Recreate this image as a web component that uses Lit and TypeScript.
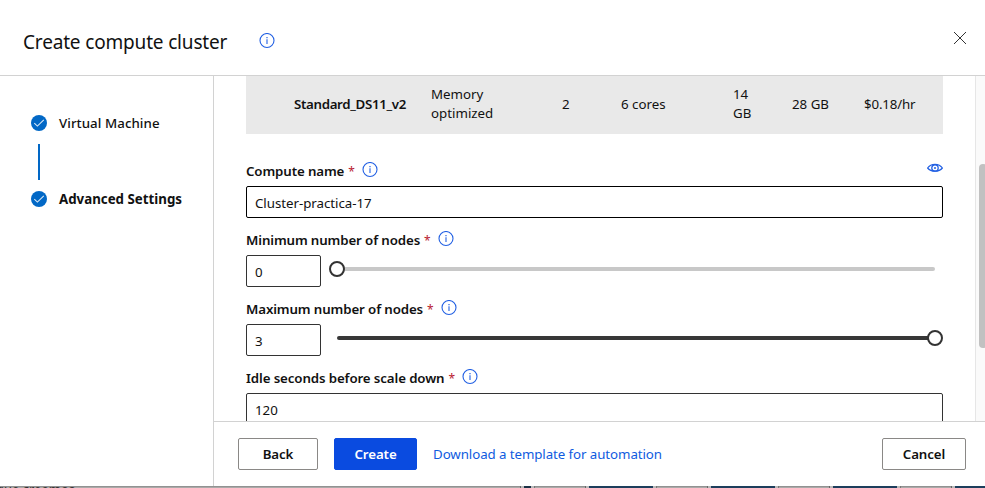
import { LitElement, html, css, svg } from "lit";
import { customElement, property } from "lit/decorators.js";

@customElement("info-icon")
class InfoIcon extends LitElement {
  static styles = css`
    :host { display: block; width: 16px; height: 16px; flex: none; }
    svg { display: block; }
  `;
  render() {
    return html`<svg width="16" height="16" viewBox="0 0 16 16" fill="none">
      <circle cx="8" cy="7.5" r="7" stroke="#2260e3" stroke-width="1.1" />
      <path d="M8 6.2V11" stroke="#2260e3" stroke-width="1.1" />
      <path d="M8 4V5.2" stroke="#2260e3" stroke-width="1.2" />
    </svg>`;
  }
}

@customElement("field-label")
class FieldLabel extends LitElement {
  @property() text = "";
  static styles = css`
    :host { display: flex; align-items: center; height: 37px; box-sizing: border-box; padding-top: 7px; white-space: nowrap; }
    .text { font-weight: 600; color: #111; letter-spacing: -0.12px; }
    .star { color: #b8192f; margin: 0 7px 0 4px; font-size: 12px; }
    info-icon { margin-top: -3px; }
  `;
  render() {
    return html`<span class="text">${this.text}</span><span class="star">*</span><info-icon></info-icon>`;
  }
}

@customElement("node-slider")
class NodeSlider extends LitElement {
  @property({ type: Number }) value = 0;
  static styles = css`
    :host { display: flex; align-items: center; height: 16px; flex: 1; }
    .fill, .rest { height: 4px; }
    .fill { background: #373737; border-radius: 2px 0 0 2px; margin-left: 8px; }
    .rest { background: #c8c8c8; flex: 1; border-radius: 0 2px 2px 0; margin-right: 8px; }
    .thumb { width: 16px; height: 16px; box-sizing: border-box; border: 2px solid #333; border-radius: 50%; background: #fff; flex: none; margin: 0 -8px; z-index: 1; }
  `;
  render() {
    return html`<div class="fill" style="width:calc(${this.value} * (100% - 16px))"></div>
      <div class="thumb"></div><div class="rest"></div>`;
  }
}

const check = svg`<svg width="16" height="16" viewBox="0 0 16 16" fill="none">
  <circle cx="8" cy="8" r="8" fill="#0268c6"/>
  <path d="M3.3 8.1L6.4 11.1L12.8 4.9" stroke="#d8e8f7" stroke-width="1.1"/></svg>`;

const tiles = [589, 711, 833, 955];

@customElement("app-root")
class AppRoot extends LitElement {
  static styles = css`
    :host { display: flex; flex-direction: column; width: 985px; height: 488px; overflow: hidden; background: #fff;
      font: 13.3px/19px "Noto Sans", "Open Sans", sans-serif; color: #111; }
    svg { display: block; flex: none; }
    header { height: 76px; box-sizing: border-box; border-bottom: 1px solid #d2d2d2; display: flex; align-items: center; padding: 9px 18px 0 23px; flex: none; }
    h1 { font-size: 19px; line-height: 26px; letter-spacing: -0.17px; font-weight: 400; margin: 0; width: 235.5px; white-space: nowrap; }
    header info-icon { margin-top: -2px; }
    .close { margin: -9px 0 0 auto; }
    .body { display: flex; height: 410px; flex: none; }
    nav { width: 214px; box-sizing: border-box; border-right: 1px solid #d2d2d2; padding: 37px 0 0 31px; flex: none; }
    .step { display: flex; align-items: center; gap: 12px; height: 20px; white-space: nowrap; font-weight: 500; }
    .s1 { letter-spacing: 0.06px; }
    .step.current { font-weight: 700; }
    .line { width: 2px; height: 36px; background: #0268c6; margin: 11px 0 9px 7px; }
    main { flex: 1; min-width: 0; display: flex; flex-direction: column; }
    .scroll { height: 345px; display: flex; overflow: hidden; }
    .form { width: 697px; padding-left: 32px; flex: none; }
    .row { height: 58px; background: #e9e9e9; display: grid; grid-template-columns: 137px 131px 59px 112px 59px 72px auto; padding-left: 48px; align-items: center; margin-bottom: 15px; white-space: nowrap; }
    .row > * { padding-bottom: 2px; }
    .row b { font-weight: 600; letter-spacing: -0.33px; }
    .price { letter-spacing: -0.16px; }
    .top { display: flex; justify-content: space-between; align-items: center; }
    .input { height: 32px; box-sizing: border-box; border: 1px solid #333; border-radius: 2px; padding: 7px 8px 0; line-height: 18px; }
    .input.active { border-color: #000; letter-spacing: -0.04px; }
    .pair { display: flex; gap: 8px; align-items: flex-start; }
    .pair .input { width: 75px; }
    .pair node-slider { margin-top: 6px; }
    .bar { margin-left: 32px; width: 10px; box-sizing: border-box; border-left: 1px solid #e6e6e6; background: #fafafa; padding: 88px 0 0 3px; overflow: hidden; }
    .grip { width: 8px; height: 184px; border-radius: 4px; background: #c1c1c1; }
    footer { height: 65px; box-sizing: border-box; border-top: 1px solid #d2d2d2; display: flex; align-items: center; padding: 0 19px 0 24px; }
    .btn { height: 32px; box-sizing: border-box; border: 1px solid #8a8886; border-radius: 2px; display: flex; align-items: center; justify-content: center; font-weight: 600; letter-spacing: -0.1px; width: 80px; }
    .primary { width: 83px; margin: 0 16px; background: #0a4be0; border-color: #0a4be0; color: #fff; }
    .cancel { width: 84px; margin-left: auto; }
    .link { color: #0f5be0; white-space: nowrap; letter-spacing: -0.08px; }
    .under { height: 2px; flex: none; position: relative; overflow: hidden; background: linear-gradient(#929292 50%, #aaa9a8 50%); font-size: 13px; }
    .under span { position: absolute; left: -4px; top: -6px; color: #35312f; white-space: nowrap; }
    .tile { position: absolute; top: 0; height: 2px; width: 64px; background: #1d3e5c; box-shadow: -3px 0 #bbb, -4px 0 #666, 3px 0 #bbb, 4px 0 #777; }
    .tile.small { left: 524px; width: 7px; background: #1b3146; }
  `;
  render() {
    return html`
      <header>
        <h1>Create compute cluster</h1><info-icon></info-icon>
        <svg class="close" width="14" height="14" viewBox="0 0 14 14"><path d="M1 1L13 13M13 1L1 13" stroke="#333" stroke-width="1"/></svg>
      </header>
      <div class="body">
        <nav>
          <div class="step">${check}<span class="s1">Virtual Machine</span></div>
          <div class="line"></div>
          <div class="step current">${check}<span class="s2">Advanced Settings</span></div>
        </nav>
        <main>
          <div class="scroll">
            <div class="form">
              <div class="row"><b>Standard_DS11_v2</b><span>Memory<br>optimized</span><span>2</span><span>6 cores</span><span>14<br>GB</span><span>28 GB</span><span class="price">$0.18/hr</span></div>
              <div class="top"><field-label text="Compute name"></field-label>
                <svg width="16" height="12" viewBox="0 0 16 12" fill="none" stroke="#2260e3"><path d="M.6 6C4 1.2 12 1.2 15.4 6C12 10.2 4 10.2 .6 6Z" stroke-width="1.2"/><circle cx="8" cy="6" r="3.2" stroke-width="1.3"/><circle cx="8" cy="6" r="1" fill="#2260e3" stroke="none"/></svg>
              </div>
              <div class="input active">Cluster-practica-17</div>
              <field-label text="Minimum number of nodes"></field-label>
              <div class="pair"><div class="input">0</div><node-slider .value=${0}></node-slider></div>
              <field-label text="Maximum number of nodes"></field-label>
              <div class="pair"><div class="input">3</div><node-slider .value=${1}></node-slider></div>
              <field-label text="Idle seconds before scale down"></field-label>
              <div class="input">120</div>
            </div>
            <div class="bar"><div class="grip"></div></div>
          </div>
          <footer>
            <div class="btn">Back</div><div class="btn primary">Create</div>
            <span class="link">Download a template for automation</span>
            <div class="btn cancel">Cancel</div>
          </footer>
        </main>
      </div>
      <div class="under"><span>que creemos</span><div class="tile small"></div>
        ${tiles.map((x) => html`<div class="tile" style="left:${x}px"></div>`)}
      </div>`;
  }
}
